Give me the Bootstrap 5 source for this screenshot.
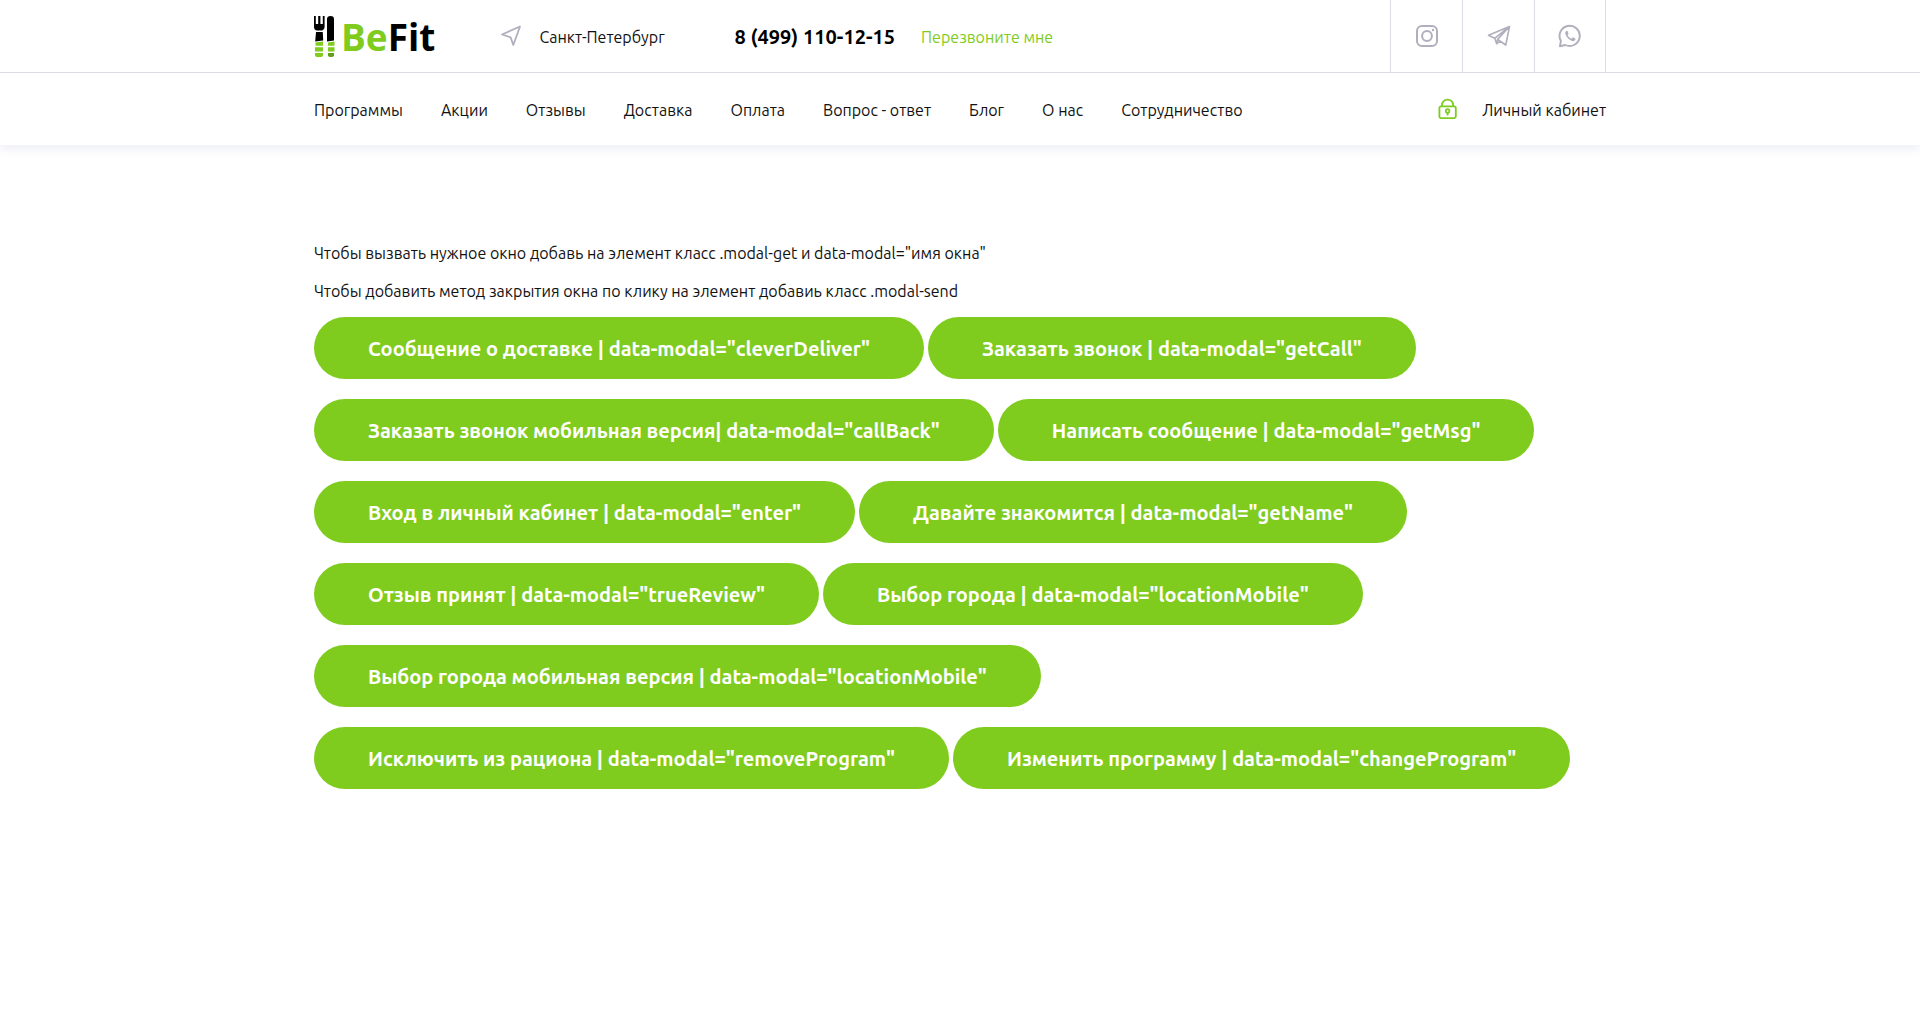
<!DOCTYPE html>
<html lang="ru">
<head>
<meta charset="utf-8">
<meta name="viewport" content="width=device-width, initial-scale=1">
<title>BeFit</title>
<link href="https://cdn.jsdelivr.net/npm/bootstrap@5.3.0/dist/css/bootstrap.min.css" rel="stylesheet">
<style>
  :root { --fit-green: #7fcc1e; --fit-line: #dcdce6; --fit-icon: #b0afbd; }
  body { font-family: Ubuntu, "Open Sans", "Noto Sans", sans-serif; font-size: 16px; line-height: 24px; color: #111; background: #fff; }
  a { color: inherit; text-decoration: none; }
  .fit-wrap { max-width: 1292px; }
  .fit-header { box-shadow: 0 4px 10px rgba(80, 90, 160, .1); }
  .fit-top { border-bottom: 1px solid var(--fit-line); }
  .fit-bar { min-height: 72px; }
  .fit-label { padding-top: 2px; }
  .fit-brand { font-family: "Open Sans", sans-serif; font-size: 37px; line-height: 48px; font-weight: 700; color: #000; gap: 6px; margin-right: 66px; }
  .fit-green { color: var(--fit-green); }
  .fit-city { gap: 18px; margin-right: 70px; }
  .fit-phone { font-size: 20px; font-weight: 700; color: #000; margin-right: 26px; }
  .fit-social a { width: 72px; border-left: 1px solid var(--fit-line); color: var(--fit-icon); }
  .fit-social a:last-child { border-right: 1px solid var(--fit-line); }
  .fit-menu { column-gap: 38px; }
  .fit-account { gap: 24px; }
  .fit-main { padding-top: 96px; padding-bottom: 96px; }
  .fit-main p { margin-bottom: 14px; }
  .fit-buttons { gap: 20px 4px; }
  .fit-btn { --bs-btn-color: #fff; --bs-btn-bg: var(--fit-green); --bs-btn-border-width: 0; --bs-btn-hover-color: #fff; --bs-btn-hover-bg: #72b81a; --bs-btn-active-color: #fff; --bs-btn-active-bg: #66a517; --bs-btn-padding-x: 54px; --bs-btn-font-size: 20px; --bs-btn-font-weight: 700; --bs-btn-line-height: 28px; padding-top: 18px; padding-bottom: 16px; }
</style>
</head>
<body>
<header class="fit-header">
  <div class="fit-top">
    <div class="container-fluid fit-wrap px-0 d-flex flex-wrap align-items-stretch fit-bar">
      <a href="#" class="fit-brand fit-label d-flex align-items-center" aria-label="BeFit">
        <svg width="21" height="42" viewBox="0 0 21 42" aria-hidden="true">
          <path d="M0 0h1.800v8h2.400V0h2.200v8h2.400V0h1.800v11q0 3-2.400 3.600h-5Q0 14 0 11z" fill="#000"/>
          <path d="M2 16h6.800l.4 8.500-8 1z" fill="#000"/>
          <path d="M13 3q0-3 3.500-3T20 3v21.500l-7 1z" fill="#000"/>
          <path d="M1.500 26.500l7.500-1v4.300H1.500zM1 31.200h8v4.300H1zM1 37h8v2.200q0 1.800-2 1.800H3q-2 0-2-1.800z" fill="#7fcc1e"/>
          <path d="M14 26.500l6.500-1v4.300H14zM14 31.200h6.500v4.300H14z" fill="#7fcc1e"/>
          <path d="M14 37h6v2.200q0 1.800-2 1.800h-2q-2 0-2-1.800z" fill="#62a01a"/>
        </svg>
        <span><span class="fit-green">Be</span>Fit</span>
      </a>
      <a href="#" class="fit-city d-flex align-items-center">
        <svg width="20" height="22" viewBox="0 0 20 22" fill="none" stroke="#b0afbd" stroke-width="1.800" stroke-linejoin="round" aria-hidden="true"><path d="M19 1.500L1 9.500l8.600 2.800L12.300 20z"/></svg>
        <span class="fit-label">Санкт-Петербург</span>
      </a>
      <div class="fit-label d-flex align-items-center">
        <a href="tel:+74991101215" class="fit-phone">8 (499) 110-12-15</a>
        <a href="#" class="fit-green">Перезвоните мне</a>
      </div>
      <div class="fit-social d-flex ms-auto">
        <a href="#" class="d-flex align-items-center justify-content-center" aria-label="Instagram">
          <svg width="24" height="24" viewBox="0 0 24 24" fill="none" stroke="currentColor" stroke-width="2"><rect x="2" y="2" width="20" height="20" rx="5"/><circle cx="12" cy="12" r="4.900"/><circle cx="18" cy="6" r="1.200" fill="currentColor" stroke="none"/></svg>
        </a>
        <a href="#" class="d-flex align-items-center justify-content-center" aria-label="Telegram">
          <svg width="24" height="24" viewBox="0 0 24 24" fill="none" stroke="currentColor" stroke-width="1.600" stroke-linejoin="round"><path d="M22.500 2.500L1.500 11.300l6.200 3L9.700 19.800l3.200-2.800L18.800 21zM22.500 2.500L7.700 14.300M22.500 2.500L10.600 15.400 9.700 19.800M10.600 15.400l2.300 1.600"/></svg>
        </a>
        <a href="#" class="d-flex align-items-center justify-content-center" aria-label="WhatsApp">
          <svg width="24" height="24" viewBox="0 0 24 24" fill="none" stroke="currentColor" stroke-width="1.900" stroke-linejoin="round"><path d="M1.900 22.200l1-5.300A10.100 10.100 0 1 1 7.300 21z"/><path d="M8.700 6.700C7 7.600 6.900 9.300 7.900 11.300c1.300 2.700 3.500 4.900 6.200 5.700 1.800.5 3.200-.4 3.500-2.300l-2.800-1.500-1.400 1.500c-1.700-.7-3-2-3.800-3.700L10.600 9.700 9.500 6.900z" fill="currentColor" stroke="none"/></svg>
        </a>
      </div>
    </div>
  </div>
  <div class="container-fluid fit-wrap px-0 d-flex flex-wrap align-items-center fit-bar">
    <nav class="fit-menu fit-label d-flex flex-wrap" aria-label="Главное меню">
      <a href="#">Программы</a>
      <a href="#">Акции</a>
      <a href="#">Отзывы</a>
      <a href="#">Доставка</a>
      <a href="#">Оплата</a>
      <a href="#">Вопрос - ответ</a>
      <a href="#">Блог</a>
      <a href="#">О нас</a>
      <a href="#">Сотрудничество</a>
    </nav>
    <a href="#" class="fit-account d-flex align-items-center ms-auto">
      <svg width="20" height="22" viewBox="0 0 20 22" fill="none" stroke="#7fcc1e" stroke-width="1.800" aria-hidden="true"><rect x="1.400" y="8.400" width="16.400" height="11.700" rx="1.500"/><path d="M4 8V7a5.600 5.400 0 0 1 11.200 0v1"/><circle cx="9.600" cy="13" r="1.800"/><path d="M9.600 14.700V17.500"/></svg>
      <span class="fit-label">Личный кабинет</span>
    </a>
  </div>
</header>
<main class="container-fluid fit-wrap px-0 fit-main">
  <p>Чтобы вызвать нужное окно добавь на элемент класс .modal-get и data-modal="имя окна"</p>
  <p>Чтобы добавить метод закрытия окна по клику на элемент добавиь класс .modal-send</p>
  <div class="fit-buttons d-flex flex-wrap">
    <button type="button" class="btn fit-btn rounded-pill" data-modal="cleverDeliver">Сообщение о доставке | data-modal="cleverDeliver"</button>
    <button type="button" class="btn fit-btn rounded-pill" data-modal="getCall">Заказать звонок | data-modal="getCall"</button>
    <button type="button" class="btn fit-btn rounded-pill" data-modal="callBack">Заказать звонок мобильная версия| data-modal="callBack"</button>
    <button type="button" class="btn fit-btn rounded-pill" data-modal="getMsg">Написать сообщение | data-modal="getMsg"</button>
    <button type="button" class="btn fit-btn rounded-pill" data-modal="enter">Вход в личный кабинет | data-modal="enter"</button>
    <button type="button" class="btn fit-btn rounded-pill" data-modal="getName">Давайте знакомится | data-modal="getName"</button>
    <button type="button" class="btn fit-btn rounded-pill" data-modal="trueReview">Отзыв принят | data-modal="trueReview"</button>
    <button type="button" class="btn fit-btn rounded-pill" data-modal="locationMobile">Выбор города | data-modal="locationMobile"</button>
    <button type="button" class="btn fit-btn rounded-pill" data-modal="locationMobile">Выбор города мобильная версия | data-modal="locationMobile"</button>
    <button type="button" class="btn fit-btn rounded-pill" data-modal="removeProgram">Исключить из рациона | data-modal="removeProgram"</button>
    <button type="button" class="btn fit-btn rounded-pill" data-modal="changeProgram">Изменить программу | data-modal="changeProgram"</button>
  </div>
</main>
<script src="https://cdn.jsdelivr.net/npm/bootstrap@5.3.0/dist/js/bootstrap.bundle.min.js"></script>
</body>
</html>
